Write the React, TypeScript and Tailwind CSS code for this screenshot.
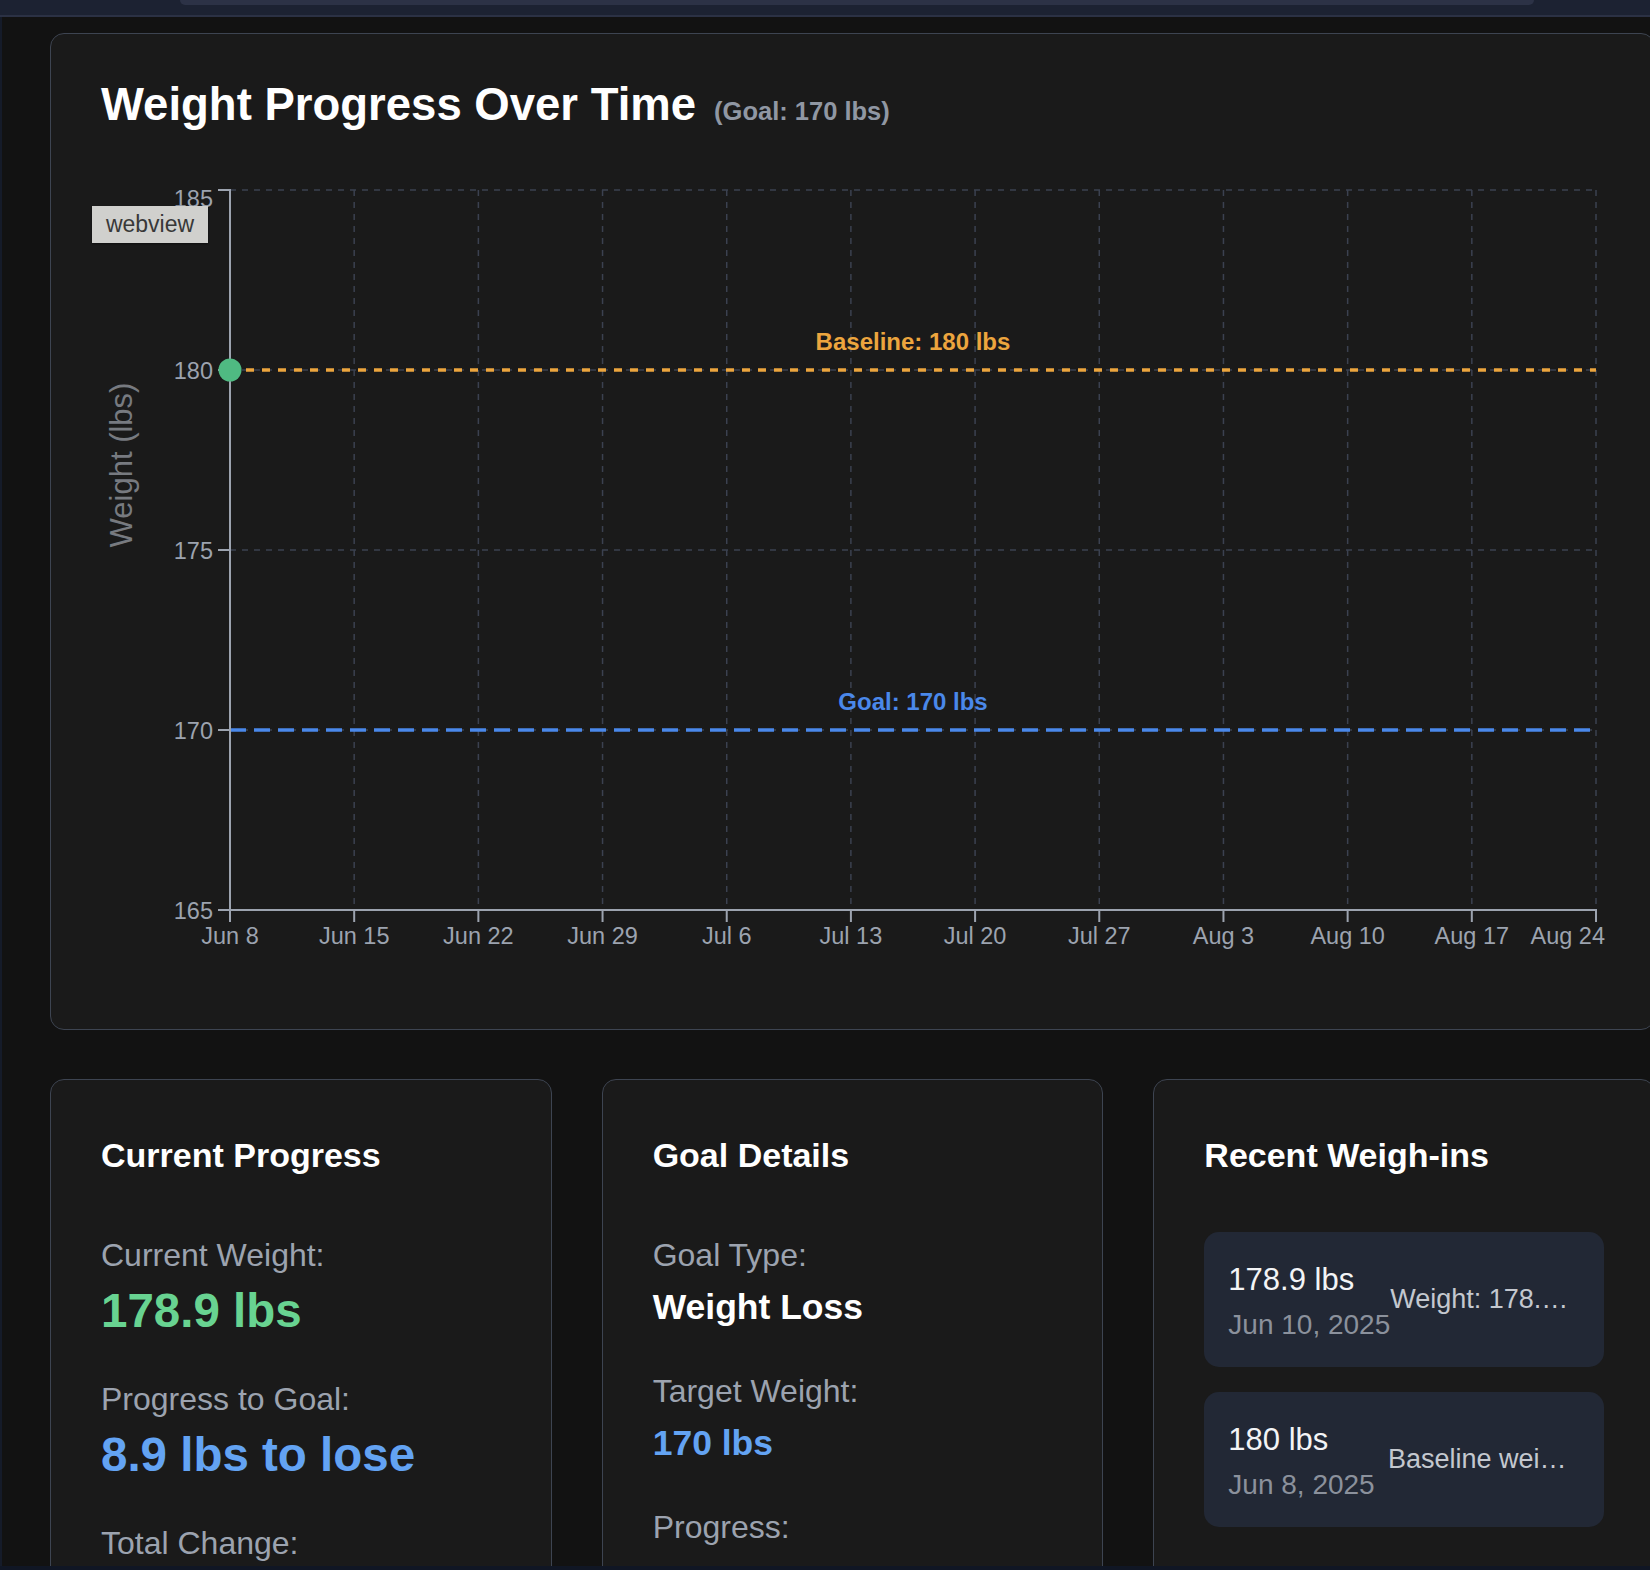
import React from "react";

const weeks = ["Jun 8", "Jun 15", "Jun 22", "Jun 29", "Jul 6", "Jul 13", "Jul 20", "Jul 27", "Aug 3", "Aug 10", "Aug 17", "Aug 24"];
const yTicks = [
  { v: 185, y: 30, ly: 46.7 },
  { v: 180, y: 210, ly: 219.3 },
  { v: 175, y: 390, ly: 399.3 },
  { v: 170, y: 570, ly: 579.3 },
  { v: 165, y: 750, ly: 759.3 },
];
const X0 = 129;
const X1 = 1495;
const step = (X1 - X0) / 11;

const WeightChart = () => {
  return (
    <svg width={1504} height={800} className="mt-[29px] block">
      {/* grid */}
      {weeks.map((w, i) => (
        <line key={w} x1={X0 + i * step} x2={X0 + i * step} y1={30} y2={750} stroke="#3b4150" strokeWidth={1.5} strokeDasharray="6 6" />
      ))}
      {yTicks.map((t) => (
        <line key={t.v} x1={X0} x2={X1} y1={t.y} y2={t.y} stroke="#3b4150" strokeWidth={1.5} strokeDasharray="6 6" />
      ))}

      {/* reference lines */}
      <line x1={X0} x2={X1} y1={210} y2={210} stroke="#eca53e" strokeWidth={3.5} strokeDasharray="8 8" />
      <text x={812} y={190} textAnchor="middle" fill="#eca53e" fontSize={24} fontWeight={700}>
        Baseline: 180 lbs
      </text>
      <line x1={X0} x2={X1} y1={570} y2={570} stroke="#4a88ea" strokeWidth={3.5} strokeDasharray="16 8" />
      <text x={812} y={550} textAnchor="middle" fill="#4a88ea" fontSize={24} fontWeight={700}>
        Goal: 170 lbs
      </text>

      {/* y axis */}
      <path d={`M${X0 - 12},30 H${X0} V750 H${X0 - 12}`} fill="none" stroke="#9ca3af" strokeWidth={2} />
      {yTicks.map((t) => (
        <g key={t.v}>
          <line x1={X0 - 12} x2={X0} y1={t.y} y2={t.y} stroke="#9ca3af" strokeWidth={2} />
          <text x={112} y={t.ly} textAnchor="end" fill="#9ca3af" fontSize={23.5}>
            {t.v}
          </text>
        </g>
      ))}
      <text transform="rotate(-90)" x={-305} y={31} textAnchor="middle" fill="#777a80" fontSize={31}>
        Weight (lbs)
      </text>

      {/* x axis */}
      <path d={`M${X0},762 V750 H${X1} V762`} fill="none" stroke="#9ca3af" strokeWidth={2} />
      {weeks.map((w, i) => {
        const x = X0 + i * step;
        const last = i === weeks.length - 1;
        return (
          <g key={w}>
            <line x1={x} x2={x} y1={750} y2={762} stroke="#9ca3af" strokeWidth={2} />
            <text x={last ? 1504 : x} y={783.5} textAnchor={last ? "end" : "middle"} fill="#9ca3af" fontSize={23.5}>
              {w}
            </text>
          </g>
        );
      })}

      <circle cx={X0} cy={210} r={11.5} fill="#4fba82" />
    </svg>
  );
};

const Label = ({ children, first }: { children: React.ReactNode; first?: boolean }) => (
  <div className={`${first ? "mt-[60px]" : "mt-10"} text-[32px] leading-[40px] text-[#9ca3af]`}>{children}</div>
);

const weighIns = [
  { w: "178.9 lbs", d: "Jun 10, 2025", note: "Weight: 178.9 lbs" },
  { w: "180 lbs", d: "Jun 8, 2025", note: "Baseline weight recorded" },
];

export default function App() {
  return (
    <div className="relative flex h-[1570px] w-[1650px] flex-col overflow-hidden bg-[#121212] font-['Liberation_Sans',Arial,sans-serif]">
      {/* top bar */}
      <div className="h-[17px] shrink-0 border-b-2 border-[#2b3144] bg-[#1c2232] pl-[180px]">
        <div className="h-[5px] w-[1354px] rounded-b-[8px] bg-[#2c3246]" />
      </div>

      <div className="flex min-h-0 flex-1">
        <div className="w-[2px] shrink-0 bg-[#151b29]" />
        <div className="flex-1 overflow-hidden pl-[48px] pt-4">
          <div className="w-[1605px]">
            {/* chart card */}
            <div className="rounded-[14px] border border-[#3d4451] bg-[#1a1a1a] px-[50px] pt-[45px] pb-[69px]">
              <div className="flex items-baseline gap-[18px]">
                <h1 className="text-[45.5px] font-bold leading-[52px] text-white">Weight Progress Over Time</h1>
                <span className="text-[25.5px] font-bold text-[#9097a3]">(Goal: 170 lbs)</span>
              </div>
              <WeightChart />
            </div>

            <div className="mt-[49px] grid grid-cols-3 gap-[50px]">
              <div className="min-h-[560px] rounded-[14px] border border-[#3d4451] bg-[#1a1a1a] px-[50px] pt-[55px]">
                <h2 className="text-[34px] font-bold leading-[40px] text-white">Current Progress</h2>
                <Label first>Current Weight:</Label>
                <div className="mt-2 text-[47.5px] font-bold leading-[56px] text-[#68d391]">178.9 lbs</div>
                <Label>Progress to Goal:</Label>
                <div className="mt-2 text-[47.5px] font-bold leading-[56px] text-[#63a3f3]">8.9 lbs to lose</div>
                <Label>Total Change:</Label>
              </div>

              <div className="min-h-[560px] rounded-[14px] border border-[#3d4451] bg-[#1a1a1a] px-[50px] pt-[55px]">
                <h2 className="text-[34px] font-bold leading-[40px] text-white">Goal Details</h2>
                <Label first>Goal Type:</Label>
                <div className="mt-2 text-[35.5px] font-bold leading-[48px] text-white">Weight Loss</div>
                <Label>Target Weight:</Label>
                <div className="mt-2 text-[35.5px] font-bold leading-[48px] text-[#63a3f3]">170 lbs</div>
                <Label>Progress:</Label>
              </div>

              <div className="min-h-[560px] rounded-[14px] border border-[#3d4451] bg-[#1a1a1a] px-[50px] pt-[55px]">
                <h2 className="text-[34px] font-bold leading-[40px] text-white">Recent Weigh-ins</h2>
                <div className="mt-[57px] flex flex-col gap-[25px]">
                  {weighIns.map((it) => (
                    <div key={it.d} className="flex h-[135px] items-center justify-between rounded-[15px] bg-[#222835] px-6">
                      <div className="shrink-0 whitespace-nowrap">
                        <div className="text-[31px] leading-[49px] text-[#f3f4f6]">{it.w}</div>
                        <div className="text-[28px] leading-[41px] text-[#8b919c]">{it.d}</div>
                      </div>
                      <div className="w-[192px] min-w-0 truncate text-[27px] text-[#c4c8cf]">{it.note}</div>
                    </div>
                  ))}
                </div>
              </div>
            </div>
          </div>
        </div>
      </div>

      <div className="h-[4px] shrink-0 bg-[#101624]" />

      {/* debug tag overlay */}
      <div className="absolute left-[92px] top-[206px] flex h-[37px] w-[116px] items-center justify-center bg-[#d0d0cd] text-[23px] text-[#383838] shadow-[0_1px_2px_rgba(0,0,0,0.4)]">
        webview
      </div>
    </div>
  );
}
